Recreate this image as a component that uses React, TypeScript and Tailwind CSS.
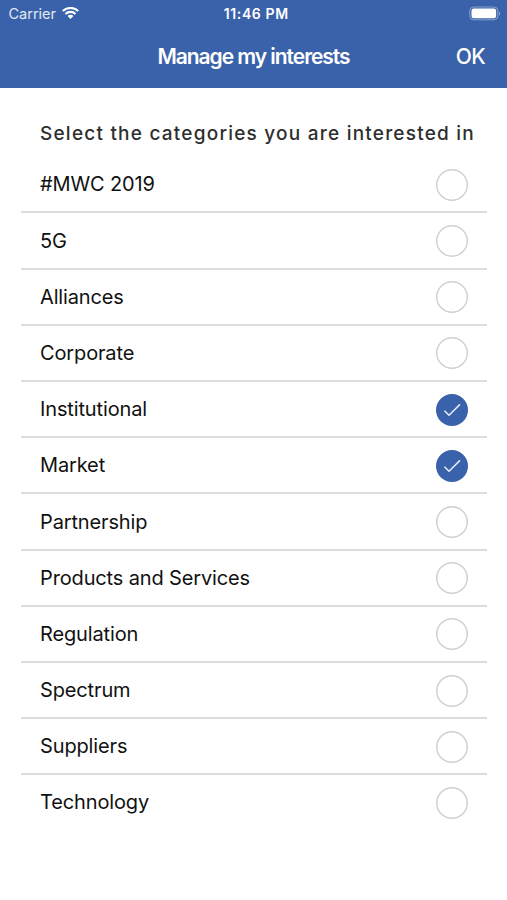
import { useState } from 'react';

const categories = [
  '#MWC 2019',
  '5G',
  'Alliances',
  'Corporate',
  'Institutional',
  'Market',
  'Partnership',
  'Products and Services',
  'Regulation',
  'Spectrum',
  'Suppliers',
  'Technology',
];

function StatusBar() {
  return (
    <div className="grid h-7 grid-cols-3 items-center pl-[8.5px] pr-[6px] text-white">
      <div className="flex items-center gap-[6px]">
        <span className="text-[14.5px] leading-none text-white/85">Carrier</span>
        <svg className="mb-[2px] h-3 w-[17px]" viewBox="0 0 17 12" fill="none" stroke="currentColor" strokeWidth="2.1">
          <path d="M0.8 4.1C5.1 -0.1 11.9 -0.1 16.2 4.1" />
          <path d="M3.5 6.9C6.2 4.2 10.8 4.2 13.5 6.9" />
          <path d="M5.6 8.9C7.2 7.4 9.8 7.4 11.4 8.9L8.5 12Z" fill="currentColor" stroke="none" />
        </svg>
      </div>
      <span className="pl-[3px] text-center text-[14px] font-semibold leading-none tracking-[0.6px]">11:46 PM</span>
      <svg className="mb-[2px] h-[15px] w-8 justify-self-end" viewBox="0 0 32 15" fill="none">
        <rect x="0.8" y="1" width="28" height="12.8" rx="3.8" stroke="white" strokeOpacity="0.4" />
        <rect x="2.5" y="2.6" width="24.6" height="9.6" rx="2.2" fill="white" />
        <path d="M30 5.2C31.4 5.9 31.4 8.9 30 9.6Z" fill="white" fillOpacity="0.45" />
      </svg>
    </div>
  );
}

export default function App() {
  const [selected, setSelected] = useState<string[]>(['Institutional', 'Market']);

  const toggle = (name: string) => {
    setSelected(selected.includes(name) ? selected.filter(s => s !== name) : [...selected, name]);
  };

  return (
    <div className="min-h-screen overflow-hidden bg-white font-['Inter','Liberation_Sans',sans-serif]">
      <header className="h-[88px] bg-[#3a62aa]">
        <StatusBar />
        <div className="grid h-[58px] grid-cols-[1fr_auto_1fr] items-center px-[22px] text-white">
          <span />
          <h1 className="text-[21px] font-semibold tracking-[-1.05px]">Manage my interests</h1>
          <button className="justify-self-end text-[21px] font-medium tracking-[-0.6px]">OK</button>
        </div>
      </header>

      <main className="pl-[21px] pr-5 pt-[34px]">
        <h2 className="whitespace-nowrap pl-[19px] text-[19px] font-medium leading-6 tracking-[1.22px] text-[#2e2e2e]">
          Select the categories you are interested in
        </h2>

        <ul className="pt-[11.3px]">
          {categories.map(name => (
            <li key={name} className="h-[56.2px] border-b-2 border-[#dcdcdc] last:border-transparent">
              <button
                onClick={() => toggle(name)}
                className="flex h-full w-full items-center justify-between px-[19px] text-left"
              >
                <span className="text-[20px] tracking-[-0.14px] text-[#111]">{name}</span>
                <svg className="mt-px size-8" viewBox="0 0 32 32" fill="none">
                  {selected.includes(name) ? (
                    <>
                      <circle cx="16" cy="16" r="16" fill="#3a62aa" />
                      <path d="M8.5 16.8L13 21.2L24 10.4" stroke="#e8eefa" strokeWidth="1.5" />
                    </>
                  ) : (
                    <circle cx="16" cy="16" r="15.3" stroke="#cfcfcf" strokeWidth="1.4" />
                  )}
                </svg>
              </button>
            </li>
          ))}
        </ul>
      </main>
    </div>
  );
}
